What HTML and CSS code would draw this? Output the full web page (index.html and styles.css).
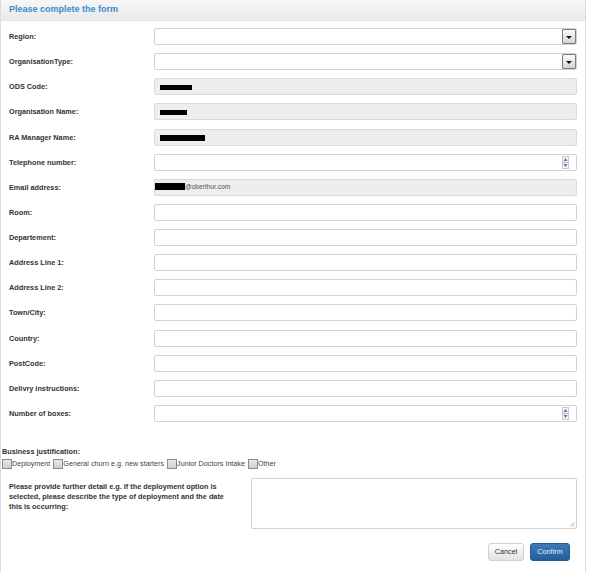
FILE: index.html
```html
<!DOCTYPE html>
<html>
<head>
<meta charset="utf-8">
<link rel="stylesheet" href="styles.css">
</head>
<body>
<div class="panel">
  <div class="panel-heading"><h3 class="panel-title">Please complete the form</h3></div>
  <div class="panel-body">
    <div class="row"><label class="lbl">Region:</label><div class="ctl select"><span class="drop"><span class="tri"></span></span></div></div>
    <div class="row"><label class="lbl">OrganisationType:</label><div class="ctl select"><span class="drop"><span class="tri"></span></span></div></div>
    <div class="row"><label class="lbl">ODS Code:</label><div class="ctl ro"><span class="redact r-ods"></span></div></div>
    <div class="row"><label class="lbl">Organisation Name:</label><div class="ctl ro"><span class="redact r-org"></span></div></div>
    <div class="row"><label class="lbl">RA Manager Name:</label><div class="ctl ro"><span class="redact r-ra"></span></div></div>
    <div class="row"><label class="lbl">Telephone number:</label><div class="ctl number"><span class="spin"><svg width="7" height="13" viewBox="0 0 7 13"><rect x="0.5" y="0.5" width="6" height="12" fill="#f4f4f4" stroke="#c8c8c8"/><path d="M1.5 5 L3.5 2 L5.5 5 Z" fill="#4f74c8"/><path d="M1.5 8 L3.5 11 L5.5 8 Z" fill="#4f74c8"/><line x1="1" y1="6.5" x2="6" y2="6.5" stroke="#9aa" stroke-width="0.8"/></svg></span></div></div>
    <div class="row"><label class="lbl">Email address:</label><div class="ctl ro email"><span class="redact r-mail"></span><span class="mail">@oberthur.com</span></div></div>
    <div class="row"><label class="lbl">Room:</label><div class="ctl"></div></div>
    <div class="row"><label class="lbl">Departement:</label><div class="ctl"></div></div>
    <div class="row"><label class="lbl">Address Line 1:</label><div class="ctl"></div></div>
    <div class="row"><label class="lbl">Address Line 2:</label><div class="ctl"></div></div>
    <div class="row"><label class="lbl">Town/City:</label><div class="ctl"></div></div>
    <div class="row"><label class="lbl">Country:</label><div class="ctl"></div></div>
    <div class="row"><label class="lbl">PostCode:</label><div class="ctl"></div></div>
    <div class="row"><label class="lbl">Delivry instructions:</label><div class="ctl"></div></div>
    <div class="row"><label class="lbl">Number of boxes:</label><div class="ctl number"><span class="spin"><svg width="7" height="13" viewBox="0 0 7 13"><rect x="0.5" y="0.5" width="6" height="12" fill="#f4f4f4" stroke="#c8c8c8"/><path d="M1.5 5 L3.5 2 L5.5 5 Z" fill="#4f74c8"/><path d="M1.5 8 L3.5 11 L5.5 8 Z" fill="#4f74c8"/><line x1="1" y1="6.5" x2="6" y2="6.5" stroke="#9aa" stroke-width="0.8"/></svg></span></div></div>

    <div class="justif">
      <div class="justif-title">Business justification:</div>
      <div class="checks">
        <span class="cb"></span><span class="cbl">Deployment</span>
        <span class="cb"></span><span class="cbl">General churn e.g. new starters</span>
        <span class="cb"></span><span class="cbl">Junior Doctors Intake</span>
        <span class="cb"></span><span class="cbl">Other</span>
      </div>
    </div>

    <div class="detail">
      <label class="detail-lbl">Please provide further detail e.g. If the deployment option is selected, please describe the type of deployment and the date this is occurring:</label>
      <div class="textarea"><svg class="grip" width="6" height="6" viewBox="0 0 6 6"><path d="M5.5 1 L1 5.5 M5.5 3 L3 5.5 M5.5 5 L5 5.5" stroke="#b0b0b0" stroke-width="0.8"/></svg></div>
    </div>

    <div class="actions">
      <button class="btn btn-default">Cancel</button>
      <button class="btn btn-primary">Confirm</button>
    </div>
  </div>
</div>
</body>
</html>
```
FILE: styles.css
```css
html, body {
  margin: 0;
  padding: 0;
  background: #fff;
}
body {
  font-family: "Liberation Sans", Arial, sans-serif;
  color: #333;
}
.panel {
  width: 584px;
  min-height: 572px;
  border-left: 1px solid #dcdcdc;
  border-right: 1px solid #dcdcdc;
  box-sizing: content-box;
}
.panel-heading {
  height: 20px;
  background: linear-gradient(#f7f7f7, #e9e9e9);
  border-bottom: 1px solid #e2e2e2;
}
.panel-title {
  margin: 0;
  padding: 3px 0 0 8px;
  font-size: 9px;
  line-height: 13px;
  font-weight: bold;
  color: #3c8bcb;
}
.panel-body {
  padding: 7px 8px 0 8px;
}
.row {
  display: flex;
  align-items: center;
  height: 17px;
  margin-bottom: 8.13px;
}
.lbl {
  width: 145px;
  flex: none;
  font-size: 7.3px;
  font-weight: bold;
  color: #333;
}
.ctl {
  position: relative;
  width: 423px;
  height: 17px;
  box-sizing: border-box;
  border: 1px solid #d2d2d2;
  border-radius: 2px;
  background: #fff;
}
.ctl.ro {
  background: #eeeeee;
  border-color: #dadada;
}
.drop {
  position: absolute;
  right: 0;
  top: 0;
  width: 14px;
  height: 15px;
  box-sizing: border-box;
  border: 1px solid #7a7a7a;
  border-radius: 1px;
  background: linear-gradient(#fbfbfb, #d4d4d4);
  display: flex;
  align-items: center;
  justify-content: center;
}
.tri {
  width: 0;
  height: 0;
  border-left: 3px solid transparent;
  border-right: 3px solid transparent;
  border-top: 3px solid #111;
  margin-top: 1px;
}
.spin {
  position: absolute;
  right: 7px;
  top: 1px;
  width: 7px;
  height: 13px;
}
.spin svg {
  display: block;
}
.redact {
  position: absolute;
  background: #000;
}
.r-ods { left: 5px; top: 6px; width: 32px; height: 5px; }
.r-org { left: 5px; top: 6px; width: 27px; height: 5px; }
.r-ra { left: 5px; top: 5px; width: 45px; height: 6px; }
.r-mail { left: 0; top: 3px; width: 30px; height: 7px; }
.mail {
  position: absolute;
  left: 30px;
  top: 2px;
  font-size: 6.6px;
  line-height: 10px;
  color: #555;
}
.justif {
  margin: 25px 0 0 -7px;
}
.justif-title {
  font-size: 7.3px;
  font-weight: bold;
  line-height: 10px;
  color: #333;
}
.checks {
  display: flex;
  align-items: center;
  height: 12px;
  margin-top: 1px;
  font-size: 7.2px;
  color: #444;
}
.cb {
  width: 10px;
  height: 10px;
  box-sizing: border-box;
  border: 1px solid #8a8a8a;
  background: linear-gradient(#e8e8e8, #d0d0d0);
  flex: none;
}
.cbl {
  margin-right: 3px;
}
.detail {
  display: flex;
  margin-top: 8px;
}
.detail-lbl {
  width: 224px;
  flex: none;
  margin-right: 18px;
  padding-top: 4px;
  font-size: 7.3px;
  line-height: 10px;
  font-weight: bold;
  color: #333;
}
.textarea {
  position: relative;
  width: 326px;
  height: 51px;
  box-sizing: border-box;
  border: 1px solid #d2d2d2;
  border-radius: 2px;
  background: #fff;
}
.grip {
  position: absolute;
  right: 1px;
  bottom: 1px;
}
.actions {
  display: flex;
  justify-content: flex-end;
  gap: 6px;
  margin-top: 14px;
  padding-right: 7px;
}
.btn {
  height: 18px;
  box-sizing: border-box;
  padding: 0;
  font-family: "Liberation Sans", Arial, sans-serif;
  font-size: 7.3px;
  border-radius: 3px;
  line-height: 16px;
}
.btn-default {
  width: 36px;
  color: #333;
  border: 1px solid #cfcfcf;
  background: linear-gradient(#ffffff, #e2e2e2);
}
.btn-primary {
  width: 40px;
  color: #e6eef8;
  border: 1px solid #245a8c;
  background: linear-gradient(#3a7bb8, #245d96);
}
```
